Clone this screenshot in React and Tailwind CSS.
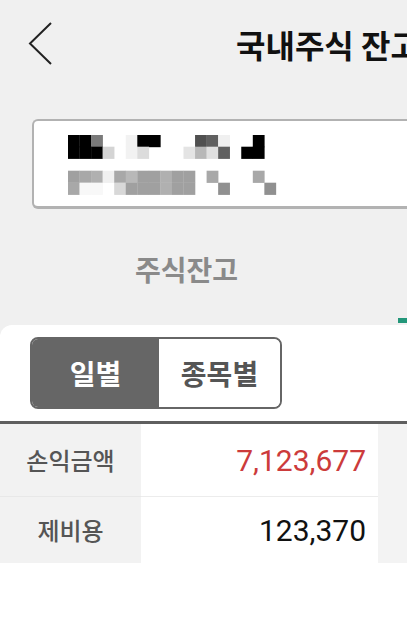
import React from "react";

const KR = { fontFamily: '"Noto Sans CJK KR", "Noto Sans", sans-serif' };
const NUM = { fontFamily: 'Roboto, "Noto Sans", sans-serif' };

const X = (i) => 68 + i * 11.55;
const Y = [135, 146.7, 170.7, 182.7];
const cells = [
  [0, 0, "#000"], [0, 1, "#000"], [0, 2, "#7a7a7a"], [0, 5, "#f2f2f2"], [0, 6, "#000"], [0, 7, "#000"],
  [0, 11, "#505050"], [0, 12, "#606060"], [0, 13, "#f0f0f0"], [0, 16, "#000"],
  [1, 0, "#000"], [1, 1, "#000"], [1, 2, "#000"], [1, 3, "#d4d4d4"], [1, 5, "#f2f2f2"], [1, 6, "#dcdcdc"],
  [1, 10, "#e4e4e4"], [1, 11, "#b8b8b8"], [1, 12, "#e0e0e0"], [1, 13, "#606060"], [1, 15, "#000"], [1, 16, "#000"],
  [2, 0, "#a0a0a0"], [2, 1, "#a8a8a8"], [2, 2, "#b0b0b0"], [2, 3, "#f0f0f0"], [2, 4, "#a8a8a8"], [2, 5, "#b8b8b8"],
  [2, 6, "#a0a0a0"], [2, 7, "#a0a0a0"], [2, 8, "#b0b0b0"], [2, 9, "#a0a0a0"], [2, 10, "#a0a0a0"], [2, 12, "#a8a8a8"], [2, 16, "#a8a8a8"],
  [3, 0, "#a8a8a8"], [3, 1, "#f8f8f8"], [3, 2, "#f8f8f8"], [3, 4, "#d8d8d8"], [3, 5, "#a0a0a0"], [3, 6, "#a0a0a0"],
  [3, 7, "#a0a0a0"], [3, 8, "#b0b0b0"], [3, 9, "#a0a0a0"], [3, 10, "#a0a0a0"], [3, 13, "#909090"], [3, 17, "#909090"],
];

function Mosaic() {
  return (
    <svg width="230" height="62" viewBox="68 135 230 62" className="block">
      {cells.map(([r, c, col], k) => (
        <rect key={k} x={X(c)} y={Y[r]} width="11.8" height="12.2" fill={col} />
      ))}
    </svg>
  );
}

export default function App() {
  return (
    <div className="w-[407px] h-[633px] overflow-hidden bg-white" style={KR}>
      <div className="bg-[#f0f0f0]">
        {/* header */}
        <div className="h-[88px] flex items-center overflow-hidden">
          <svg width="30" height="46" viewBox="0 0 30 46" className="ml-[26px] shrink-0">
            <path d="M25 2 L4 22.5 L25 43" fill="none" stroke="#222" strokeWidth="2" strokeLinejoin="miter" />
          </svg>
          <div className="ml-[180px] whitespace-nowrap text-[32px] font-bold text-[#111] leading-none">
            국내주식 잔고
          </div>
        </div>
        {/* account box */}
        <div className="pt-[31px] pl-[32px]">
          <div className="h-[90px] w-[400px] bg-white border-2 border-r-0 border-b-[3px] border-[#b2b2b2] rounded-l-[6px] pl-[34px] pt-[14px]">
            <Mosaic />
          </div>
        </div>
        {/* tab */}
        <div className="h-[116px] flex flex-col">
          <div className="flex-1 flex items-center pl-[135px] pt-[11px] text-[28px] font-bold text-[#8a8a8a] leading-none">
            주식잔고
          </div>
          <div className="h-[7px] flex justify-end">
            <div className="w-[9px] h-[5px] bg-[#23977a]"></div>
          </div>
        </div>
      </div>
      {/* panel */}
      <div className="bg-[#f0f0f0]">
        <div className="bg-white rounded-tl-[12px] pt-[12px] pb-[12px] pl-[30px]">
          <div className="w-[252px] h-[72px] flex rounded-[8px] border-2 border-[#666] overflow-hidden">
            <div className="w-[127px] bg-[#666] flex items-center justify-center text-white text-[28px] font-bold leading-none">
              일별
            </div>
            <div className="flex-1 bg-white flex items-center justify-center text-[#555] text-[28px] font-bold leading-none">
              종목별
            </div>
          </div>
        </div>
      </div>
      <div className="h-[3px] bg-[#5f5f5f]"></div>
      {/* rows */}
      <div className="flex">
        <div className="w-[141px] bg-[#f2f2f2]">
          <div className="h-[72px] flex items-center justify-center text-[24px] font-medium text-[#555]">손익금액</div>
          <div className="h-[1px] bg-[#e8e8e8]"></div>
          <div className="h-[66px] flex items-center justify-center text-[24px] font-medium text-[#555]">제비용</div>
        </div>
        <div className="w-[237px] bg-white">
          <div className="h-[72px] flex items-center justify-end pr-[12px] text-[30px] text-[#cc3b3b]" style={NUM}>
            7,123,677
          </div>
          <div className="h-[1px] bg-[#ececec]"></div>
          <div className="h-[66px] flex items-center justify-end pr-[12px] text-[30px] text-[#111]" style={NUM}>
            123,370
          </div>
        </div>
        <div className="flex-1 bg-[#f3f3f3]"></div>
      </div>
    </div>
  );
}
